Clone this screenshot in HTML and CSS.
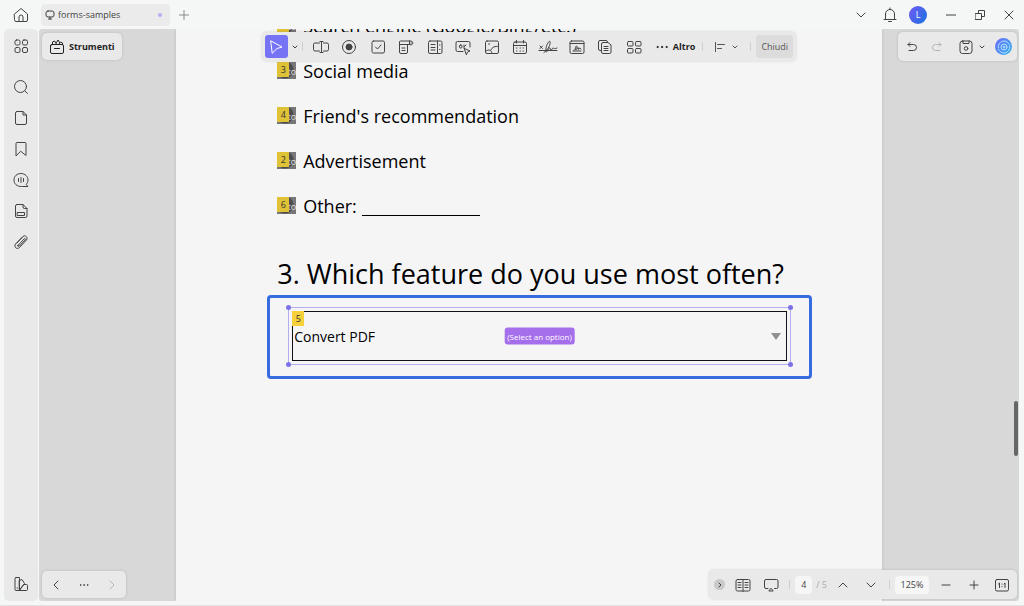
FILE: index.html
```html
<!DOCTYPE html>
<html lang="it">
<head>
    <meta charset="utf-8">
    <meta name="viewport" content="width=device-width, initial-scale=1">
    <title>forms-samples</title>
    <link rel="stylesheet" href="styles.css">
</head>
<body>
    <header class="titlebar">
        <button class="icon-btn home" aria-label="Home">
            <svg class="icon" viewBox="0 0 16 16"><path d="M1.5 7 8 1.5 14.500 7v6a1.500 1.500 0 0 1-1.500 1.500H3A1.500 1.500 0 0 1 1.500 13zM6 14.500V10a2 2 0 0 1 4 0v4.500"/></svg>
        </button>
        <div class="tab">
            <svg class="icon-small" viewBox="0 0 10 10"><rect x="1" y="1" width="8" height="6" rx="2"/><path d="M5 7v2M3.500 9h3"/></svg>
            <span>forms-samples</span>
            <i class="unsaved"></i>
        </div>
        <button class="icon-btn new-tab" aria-label="Nuova scheda">
            <svg class="icon-small" viewBox="0 0 10 10"><path d="M5 .5v9M.5 5h9"/></svg>
        </button>
        <div class="window-buttons">
            <button class="icon-btn" aria-label="Schede"><svg class="icon-small" viewBox="0 0 10 10"><path d="m1 3 4 4 4-4"/></svg></button>
            <button class="icon-btn" aria-label="Notifiche"><svg class="icon" viewBox="0 0 16 16"><path d="M2 12.500h12M3.500 12.500V7a4.500 4.500 0 0 1 9 0v5.500M6.500 14.500h3M8 1v1.500"/></svg></button>
            <button class="icon-btn avatar" aria-label="Account">L</button>
            <button class="icon-btn" aria-label="Riduci"><svg class="icon-small" viewBox="0 0 10 10"><path d="M0 5h10"/></svg></button>
            <button class="icon-btn" aria-label="Ripristina"><svg class="icon-small" viewBox="0 0 10 10"><path d="M.5 3.500h6v6h-6zM3.500 3.500v-3h6v6h-3"/></svg></button>
            <button class="icon-btn" aria-label="Chiudi finestra"><svg class="icon-small" viewBox="0 0 10 10"><path d="m1 1 8 8M9 1 1 9"/></svg></button>
        </div>
    </header>

    <div class="main">
        <nav class="sidebar">
            <button class="icon-btn apps" aria-label="Pannelli">
                <svg class="icon" viewBox="0 0 16 16"><rect x="2" y="2" width="5" height="5" rx="1.500"/><rect x="9.500" y="2" width="5" height="5" rx="1.500"/><rect x="2" y="9.500" width="5" height="5" rx="1.500"/><rect x="9.500" y="9.500" width="5" height="5" rx="1.500"/></svg>
            </button>
            <button class="icon-btn" aria-label="Cerca"><svg class="icon" viewBox="0 0 16 16"><circle cx="7.500" cy="7.500" r="6"/><path d="m12 12 2.500 2.500"/></svg></button>
            <button class="icon-btn" aria-label="Miniature"><svg class="icon" viewBox="0 0 16 16"><path d="M4 1.500h6L13.500 5v8a1.500 1.500 0 0 1-1.500 1.500H4A1.500 1.500 0 0 1 2.500 13V3A1.500 1.500 0 0 1 4 1.500zM10 1.500V5h3.500"/></svg></button>
            <button class="icon-btn" aria-label="Segnalibri"><svg class="icon" viewBox="0 0 16 16"><path d="M3 14.500v-12a1 1 0 0 1 1-1h8a1 1 0 0 1 1 1v12l-5-4z"/></svg></button>
            <button class="icon-btn" aria-label="Commenti"><svg class="icon" viewBox="0 0 16 16"><path d="M14.500 14.500H8.500c-4.500 0-7.500-2.500-7.500-6.500s3-6.500 7-6.500S15 4.500 15 8c0 1.500-.5 3-1.500 4zM5.500 6.500v3M8 5.500v5M10.500 6.500v3"/></svg></button>
            <button class="icon-btn" aria-label="Campi"><svg class="icon" viewBox="0 0 16 16"><path d="M4 1.500h6L14 5.500V13a1.500 1.500 0 0 1-1.500 1.500H4A1.500 1.500 0 0 1 2.500 13V3A1.500 1.500 0 0 1 4 1.500zM10 1.500V4a1.500 1.500 0 0 0 1.500 1.500H14M4.500 9.500h7v3h-7z"/></svg></button>
            <button class="icon-btn" aria-label="Allegati"><svg class="icon" viewBox="0 0 16 16"><path d="m4 9 6-6.500c2-2 5.500 1 3.500 3.500l-7 7.500c-2.500 2.500-6-.500-4-3.500l7-7M5 11.500l6-6.500c1-1 2 0 1 1l-5.500 6c-1.500 1-2.500 0-1.500-1z"/></svg></button>
            <button class="icon-btn palette" aria-label="Tema"><svg class="icon" viewBox="0 0 16 16"><path d="M3 1.500h3.500v13H3a1 1 0 0 1-1-1v-11a1 1 0 0 1 1-1zM6.500 4.500l2.500-1 2.500 4-5 7zM11 8.500h2.500a1 1 0 0 1 1 1v4a1 1 0 0 1-1 1h-7zM4 12h.500"/></svg></button>
        </nav>

        <main class="workspace">
            <article class="page">
                <ul class="choices">
                    <li><span class="widget"><input type="radio" name="source" id="search"><small>to</small><b>1</b></span><label for="search">Search engine (Google/Bing/etc.)</label></li>
                    <li><span class="widget"><input type="radio" name="source" id="social"><small>to</small><b>3</b></span><label for="social">Social media</label></li>
                    <li><span class="widget"><input type="radio" name="source" id="friend"><small>to</small><b>4</b></span><label for="friend">Friend's recommendation</label></li>
                    <li><span class="widget"><input type="radio" name="source" id="advert"><small>to</small><b>2</b></span><label for="advert">Advertisement</label></li>
                    <li><span class="widget"><input type="radio" name="source" id="other"><small>to</small><b>6</b></span><label for="other">Other:</label><span class="blank"></span></li>
                </ul>
                <h2><label for="feature">3. Which feature do you use most often?</label></h2>
                <div class="highlight">
                    <div class="selection">
                        <i class="handle top left"></i>
                        <i class="handle top right"></i>
                        <i class="handle bottom left"></i>
                        <i class="handle bottom right"></i>
                        <select id="feature">
                            <option>Convert PDF</option>
                        </select>
                        <b class="order">5</b>
                        <span class="hint">(Select an option)</span>
                        <i class="arrow"></i>
                    </div>
                </div>
            </article>

            <button class="panel tools">
                <svg class="icon" viewBox="0 0 16 16"><rect x="1.500" y="5.500" width="13" height="9" rx="1.500"/><path d="M1.500 8V6.500L3 5.500M5.500 9.500h5M3.500 5V3l2-1 2 3M7.500 3.500 9 1l1.500 2.500M10 5l1.500-2 2 1v1.500"/></svg>
                Strumenti
            </button>

            <div class="form-bar">
                <div class="panel form-tools">
                    <button class="icon-btn pointer" aria-label="Seleziona"><svg class="icon" viewBox="0 0 16 16"><path d="M3 2l11 6-5 1.500L4.500 14z"/></svg></button>
                    <button class="icon-btn more" aria-label="Altre selezioni"><svg viewBox="0 0 6 6"><path d="m1 2 2 2 2-2"/></svg></button>
                    <span class="divider"></span>
                    <div class="fields">
                        <button class="icon-btn" aria-label="Campo di testo"><svg class="icon" viewBox="0 0 16 16"><path d="M6.500 4H2a1.500 1.500 0 0 0-1.500 1.500v5A1.500 1.500 0 0 0 2 12h4.500M10.500 4H14a1.500 1.500 0 0 1 1.500 1.500v5A1.500 1.500 0 0 1 14 12h-3.500M8.500 2.500v11M7 2.500h3M7 13.500h3"/></svg></button>
                        <button class="icon-btn" aria-label="Pulsante di opzione"><svg class="icon" viewBox="0 0 16 16"><circle cx="8" cy="8" r="6.500"/><circle class="solid" cx="8" cy="8" r="3"/></svg></button>
                        <button class="icon-btn" aria-label="Casella di controllo"><svg class="icon" viewBox="0 0 16 16"><rect x="2" y="2" width="12.500" height="12" rx="1.500"/><path d="m5.500 8 2 2 3.500-4"/></svg></button>
                        <button class="icon-btn" aria-label="Elenco a discesa"><svg class="icon" viewBox="0 0 16 16"><path d="M11.500 5.500h-10V3A1 1 0 0 1 2.500 2H13a2 2 0 1 1-1.500 3.500zM11.500 2v3.500M13 4h.500M1.500 5.500v7.500A1.500 1.500 0 0 0 3 14.500h5A1.500 1.500 0 0 0 9.500 13V5.500M4 9h3M4 11.500h3"/></svg></button>
                        <button class="icon-btn" aria-label="Casella di riepilogo"><svg class="icon" viewBox="0 0 16 16"><rect x="1.500" y="2" width="13.500" height="12.500" rx="1.500"/><path d="M10.500 2v12.500M4 5.500h4M4 8.500h4M4 11h4M12.500 6h.500M12.500 10.500h.500"/></svg></button>
                        <button class="icon-btn" aria-label="Pulsante"><svg class="icon" viewBox="0 0 16 16"><path d="M8 12.500H2.500A1.500 1.500 0 0 1 1 11V4a1.500 1.500 0 0 1 1.500-1.500h11A1.500 1.500 0 0 1 15 4v4M9.500 9.500l5.500 2.500-2.500 1-1 2.500z"/><rect x="4.500" y="6" width="2.500" height="3" rx="1"/><path d="M9 6v3M11 6 9.500 7.500"/></svg></button>
                        <button class="icon-btn" aria-label="Immagine"><svg class="icon" viewBox="0 0 16 16"><rect x="1.500" y="2" width="13" height="12.500" rx="1.500"/><path d="M1.500 12.500C5 9.500 7.500 11 8 14.500M7 11c1-3 4-4 7.500-3.500M4.500 5h1"/></svg></button>
                        <button class="icon-btn" aria-label="Data"><svg class="icon" viewBox="0 0 16 16"><rect x="1.500" y="3" width="13" height="11.500" rx="1.500"/><path d="M1.500 6.500h13M4.500 1.500V4M11.500 1.500V4M4.500 9h.500M8 9h.500M11 9h.500M4.500 12h.500M8 12h.500M11 12h.500"/></svg></button>
                        <button class="icon-btn sign" aria-label="Firma"><svg viewBox="0 0 20 16"><path d="M1 11.500h18M2 7l2.500 2.500M4.500 7 2 9.500M6 13.500C10 11 13 5 12 2.500 10.500 1 7 9 8 12.500c1 2 2-3 3.500-3.500s0 2 1.500 2 1-2 2-2 .500 1.500 4 0"/></svg></button>
                        <button class="icon-btn" aria-label="Firma digitale"><svg class="icon" viewBox="0 0 16 16"><rect x="1" y="2" width="14" height="12.500" rx="1.500"/><path d="M1 4.500h14M4 12h8M5 11c3-1 3.500-4 2.500-4s-2 4 0 3.500l1.500-2 .500 2 1-1.500 1.500 1"/></svg></button>
                        <button class="icon-btn" aria-label="Duplica"><svg class="icon" viewBox="0 0 16 16"><path d="M4.500 11.500H3A1.500 1.500 0 0 1 1.500 10V3A1.500 1.500 0 0 1 3 1.500h6A1.500 1.500 0 0 1 10.500 3"/><path d="M6 3.500h5L14 6v7a1.500 1.500 0 0 1-1.500 1.500H6A1.500 1.500 0 0 1 4.500 13V5A1.500 1.500 0 0 1 6 3.500zM7 7.500h4M7 9.500h4M7 11.500h4"/></svg></button>
                        <button class="icon-btn" aria-label="Riconosci campi"><svg class="icon" viewBox="0 0 16 16"><rect x="1.500" y="2.500" width="5.500" height="4.500" rx="1"/><rect x="9.500" y="2.500" width="5.500" height="4.500" rx="1"/><rect x="1.500" y="9.500" width="5.500" height="4.500" rx="1"/><rect x="9.500" y="9.500" width="5.500" height="4.500" rx="1"/></svg></button>
                    </div>
                    <button class="altro"><svg viewBox="0 0 12 4"><circle class="solid" cx="1.500" cy="2" r=".600"/><circle class="solid" cx="6" cy="2" r=".600"/><circle class="solid" cx="10.500" cy="2" r=".600"/></svg>Altro</button>
                    <span class="divider"></span>
                    <button class="icon-btn align" aria-label="Allinea"><svg class="icon-small" viewBox="0 0 10 10"><path d="M.5 0v10M2.500 2.500h7M2.500 6.500h4"/></svg><svg class="caret" viewBox="0 0 6 6"><path d="m1 2 2 2 2-2"/></svg></button>
                    <span class="divider"></span>
                    <button class="close">Chiudi</button>
                </div>
            </div>

            <div class="panel history">
                <button class="icon-btn" aria-label="Annulla"><svg class="icon-small" viewBox="0 0 10 10"><path d="M3 .5 1 2.500l2 2M1 2.500h5.500a2.500 2.500 0 0 1 0 6H2"/></svg></button>
                <button class="icon-btn faded" aria-label="Ripeti"><svg class="icon-small" viewBox="0 0 10 10"><path d="m7 .5 2 2-2 2M9 2.500H3.500a2.500 2.500 0 0 0 0 6H8"/></svg></button>
                <button class="icon-btn save" aria-label="Salva"><svg class="icon" viewBox="0 0 16 16"><rect x="2" y="2" width="12" height="12.500" rx="2.500"/><path d="M5 2v2.500h6V2"/><circle cx="8" cy="9.500" r="1.800"/></svg><svg class="caret" viewBox="0 0 6 6"><path d="m1 2 2 2 2-2"/></svg></button>
                <button class="icon-btn assistant" aria-label="Assistente"><svg class="icon" viewBox="0 0 16 16"><circle cx="8" cy="8" r="3"/><path d="M2.500 9C1.500 5 5 2 8 2s4 2 5.500 3.500M13.500 7c1 4-2.500 7-5.500 7s-4-2-5.500-3.500M8 7v2M7 8h2"/></svg></button>
            </div>

            <div class="panel views">
                <button class="icon-btn" aria-label="Vista precedente"><svg class="icon-small" viewBox="0 0 10 10"><path d="M7 1 3 5l4 4"/></svg></button>
                <button class="icon-btn" aria-label="Altre viste"><svg class="icon-small" viewBox="0 0 10 10"><circle class="solid" cx="1.500" cy="5" r=".300"/><circle class="solid" cx="5" cy="5" r=".300"/><circle class="solid" cx="8.500" cy="5" r=".300"/></svg></button>
                <button class="icon-btn faded" aria-label="Vista successiva"><svg class="icon-small" viewBox="0 0 10 10"><path d="m3 1 4 4-4 4"/></svg></button>
            </div>

            <div class="panel pager">
                <button class="icon-btn expand" aria-label="Espandi"><svg viewBox="0 0 6 6"><path d="m2 1 2 2-2 2"/></svg></button>
                <button class="icon-btn" aria-label="Lettura"><svg class="icon" viewBox="0 0 16 16"><rect x="1" y="2.500" width="14" height="11.500" rx="1.500"/><path d="M8 2.500v12M3 5.500h3M3 8h3M3 10.500h3M10 5.500h3M10 8h3M10 10.500h3"/></svg></button>
                <button class="icon-btn" aria-label="Presentazione"><svg class="icon" viewBox="0 0 16 16"><path d="M5 11.500H3A1.500 1.500 0 0 1 1.500 10V4A1.500 1.500 0 0 1 3 2.500h10.500A1.500 1.500 0 0 1 15 4v6a1.500 1.500 0 0 1-1.500 1.500h-2M8.200 11.500l2 2.500h-4z"/></svg></button>
                <span class="divider"></span>
                <input class="page-number" type="text" value="4" aria-label="Pagina">
                <span class="total">/ 5</span>
                <button class="icon-btn" aria-label="Pagina precedente"><svg class="icon-small" viewBox="0 0 10 10"><path d="m1 7 4-4 4 4"/></svg></button>
                <button class="icon-btn" aria-label="Pagina successiva"><svg class="icon-small" viewBox="0 0 10 10"><path d="m1 3 4 4 4-4"/></svg></button>
                <span class="divider"></span>
                <input class="zoom" type="text" value="125%" aria-label="Zoom">
                <button class="icon-btn" aria-label="Riduci zoom"><svg class="icon-small" viewBox="0 0 10 10"><path d="M1 5h8"/></svg></button>
                <button class="icon-btn" aria-label="Aumenta zoom"><svg class="icon-small" viewBox="0 0 10 10"><path d="M5 1v8M1 5h8"/></svg></button>
                <button class="icon-btn" aria-label="Dimensione reale"><svg class="icon" viewBox="0 0 16 16"><rect x="1.500" y="2.500" width="13" height="11.500" rx="1.500"/><path d="M4.500 7l1-1v4.500M10 7l1-1v4.500M8 7v.200M8 9.500v.200"/></svg></button>
            </div>

            <div class="scrollbar"></div>
        </main>
    </div>
</body>
</html>
```
FILE: styles.css
```css
:root {
    --frame: #f5f6f6;
    --panel: #e9e9e9;
    --canvas: #d8d8d9;
    --ink: #434343;
    --purple: #7b72ea;
    --blue: #376be0;
    --yellow: #f6d13c;
}
* {
    box-sizing: border-box;
}
body {
    margin: 0;
    height: 100vh;
    display: flex;
    flex-direction: column;
    background: var(--frame);
    color: var(--ink);
    font-family: "Open Sans", "Noto Sans", sans-serif;
    font-size: 9px;
    border-bottom: 1px solid #e2e2e2;
    padding-bottom: 4px;
}
button, input, select {
    font: inherit;
    color: inherit;
    border: none;
    background: none;
    padding: 0;
    margin: 0;
}
button {
    cursor: pointer;
}
svg {
    display: block;
    flex: none;
    fill: none;
    stroke: currentColor;
    stroke-linecap: round;
    stroke-linejoin: round;
}
.solid {
    fill: currentColor;
}
.icon {
    width: 16px;
    height: 16px;
}
.icon-small {
    width: 10px;
    height: 10px;
}
.icon-btn {
    width: 20px;
    height: 20px;
    flex: none;
    display: flex;
    align-items: center;
    justify-content: center;
}
.faded {
    color: #b5b5b5;
}

/* title bar */
.titlebar {
    flex: none;
    height: 29px;
    padding: 0 5px 0 11px;
    display: flex;
    align-items: center;
}
.tab {
    width: 129px;
    height: 22px;
    margin-left: 10px;
    padding: 0 8px 0 4px;
    display: flex;
    align-items: center;
    gap: 3px;
    background: #ebebec;
    border-radius: 4px;
}
.unsaved {
    width: 4px;
    height: 4px;
    margin-left: auto;
    border-radius: 50%;
    background: #b3adec;
}
.new-tab {
    margin-left: 4px;
    color: #8a8a8a;
}
.window-buttons {
    margin-left: auto;
    display: flex;
    align-items: center;
    gap: 9px;
}
.window-buttons .avatar {
    width: 18px;
    height: 18px;
    margin: 0 5px 0 0;
    border-radius: 50%;
    background: linear-gradient(120deg, #7457f5, #1676e0);
    color: #fff;
}

/* side bar */
.main {
    flex: 1;
    min-height: 0;
    display: flex;
    gap: 1px;
    padding: 0 5px 0 4px;
}
.sidebar {
    flex: none;
    width: 34px;
    padding: 7px 0;
    display: flex;
    flex-direction: column;
    align-items: center;
    gap: 11px;
    background: var(--panel);
    border-radius: 5px;
}
.apps {
    margin-bottom: 10px;
}
.palette {
    margin-top: auto;
}

/* document */
.workspace {
    flex: 1;
    position: relative;
    overflow: hidden;
    background: var(--canvas);
    border-radius: 3px;
}
.page {
    width: 72%;
    height: 100%;
    margin: 0 auto;
    padding: 0 70px 0 91px;
    overflow: hidden;
    background: #f5f5f6;
    box-shadow: 0 0 3px rgba(0, 0, 0, 0.15);
    color: #000;
}
.choices {
    list-style: none;
    margin: -26px 0;
    padding: 0 0 0 10px;
    font-size: 18px;
}
.choices li {
    height: 45px;
    display: flex;
    align-items: center;
    gap: 7px;
}
.widget {
    position: relative;
    width: 19px;
    height: 17px;
}
.widget input {
    appearance: none;
    display: block;
    width: 19px;
    height: 17px;
    background: radial-gradient(circle at 8px 8px, #4c4c50 8px, #77777a 9px);
}
.widget b, .order {
    position: absolute;
    left: 0;
    top: 0;
    width: 12px;
    height: 15px;
    background: var(--yellow);
    color: #333;
    font-size: 9px;
    font-weight: 400;
    line-height: 15px;
    text-align: center;
}
.widget b {
    background: #e0c236;
}
.widget small {
    position: absolute;
    right: 0;
    bottom: 0;
    color: #e5e5e5;
    font-size: 9px;
    line-height: 15px;
}
.blank {
    width: 118px;
    height: 20px;
    margin-left: -2px;
    border-bottom: 1px solid #000;
}
h2 {
    margin: 52px 0 0;
    font-size: 27px;
    font-weight: 400;
    line-height: 40px;
    padding-left: 10px;
    white-space: nowrap;
}
.highlight {
    margin-top: 1px;
    padding: 9px 18px 11px;
    border: 3px solid var(--blue);
    border-radius: 4px;
}
.selection {
    position: relative;
    padding: 3px;
    border: 1px solid #b5adf0;
}
.handle {
    position: absolute;
    width: 5px;
    height: 5px;
    border-radius: 50%;
    background: var(--purple);
}
.handle.top { top: -3px; }
.handle.bottom { bottom: -3px; }
.handle.left { left: -3px; }
.handle.right { right: -3px; }
.selection select {
    appearance: none;
    display: block;
    width: 100%;
    height: 50px;
    padding: 0 1px;
    border: 1px solid #111;
    border-radius: 0;
    font-size: 14px;
}
.order {
    left: 3px;
    top: 3px;
}
.hint {
    position: absolute;
    left: 50%;
    top: 50%;
    transform: translate(-50%, -50%);
    padding: 0 3px;
    border-radius: 3px;
    background: #a56eea;
    color: #fff;
    font-size: 8px;
    line-height: 17px;
    white-space: nowrap;
}
.arrow {
    position: absolute;
    right: 9px;
    top: 25px;
    border: 5px solid transparent;
    border-top: 7px solid #919191;
    border-bottom: none;
}

/* floating panels */
.panel {
    display: flex;
    align-items: center;
    background: var(--panel);
    border-radius: 5px;
    box-shadow: 0 0 3px rgba(0, 0, 0, 0.15);
}
.tools {
    position: absolute;
    left: 3px;
    top: 4px;
    height: 27px;
    padding: 0 7px;
    gap: 4px;
    font-weight: 700;
    color: #222;
}
.form-bar {
    position: absolute;
    left: 0;
    right: 0;
    top: 3px;
    display: flex;
    justify-content: center;
}
.form-tools {
    height: 29px;
    padding: 0 3px;
}
.divider {
    flex: none;
    width: 1px;
    height: 9px;
    background: #cfcfcf;
}
.pointer {
    width: 23px;
    height: 23px;
    border-radius: 3px;
    background: #7773f5;
    color: #fff;
}
.more {
    width: 14px;
}
.more svg, .caret, .expand svg {
    width: 6px;
    height: 6px;
}
.fields {
    width: 333px;
    margin: 0 12px 0 8px;
    display: flex;
    justify-content: space-between;
}
.sign svg {
    width: 20px;
    height: 16px;
}
.altro {
    margin-right: 7px;
    display: flex;
    align-items: center;
    gap: 5px;
    font-weight: 700;
    color: #222;
}
.altro svg {
    width: 12px;
    height: 4px;
}
.align {
    width: 47px;
    gap: 7px;
    color: #555;
}
.close {
    height: 23px;
    margin-left: 5px;
    padding: 0 5px;
    border-radius: 3px;
    background: #dcdcdc;
    color: #555;
}
.history {
    position: absolute;
    right: 2px;
    top: 3px;
    height: 29px;
    padding: 0 5px 0 4px;
    gap: 5px;
}
.save {
    width: 38px;
    gap: 5px;
}
.assistant {
    width: 17px;
    height: 17px;
    border-radius: 50%;
    background: linear-gradient(130deg, #6f6cf7, #32b4ee);
    color: #b5dfff;
}
.views {
    position: absolute;
    left: 3px;
    bottom: 3px;
    height: 27px;
    padding: 0 4px;
    gap: 8px;
}
.pager {
    position: absolute;
    right: 2px;
    bottom: 2px;
    height: 29px;
    padding: 0 5px;
    gap: 8px;
}
.expand {
    width: 11px;
    height: 11px;
    border-radius: 50%;
    background: #c9c9c9;
}
.page-number, .zoom {
    width: 17px;
    height: 18px;
    border-radius: 4px;
    background: #f6f6f6;
    text-align: center;
}
.page-number {
    margin-left: -3px;
}
.zoom {
    width: 34px;
    margin: 0 -1px 0 -3px;
}
.total {
    margin: 0 -2px 0 -4px;
    color: #aaa;
}
.scrollbar {
    position: absolute;
    right: 1px;
    top: 65%;
    width: 4px;
    height: 55px;
    border-radius: 2px;
    background: #666;
}
```
